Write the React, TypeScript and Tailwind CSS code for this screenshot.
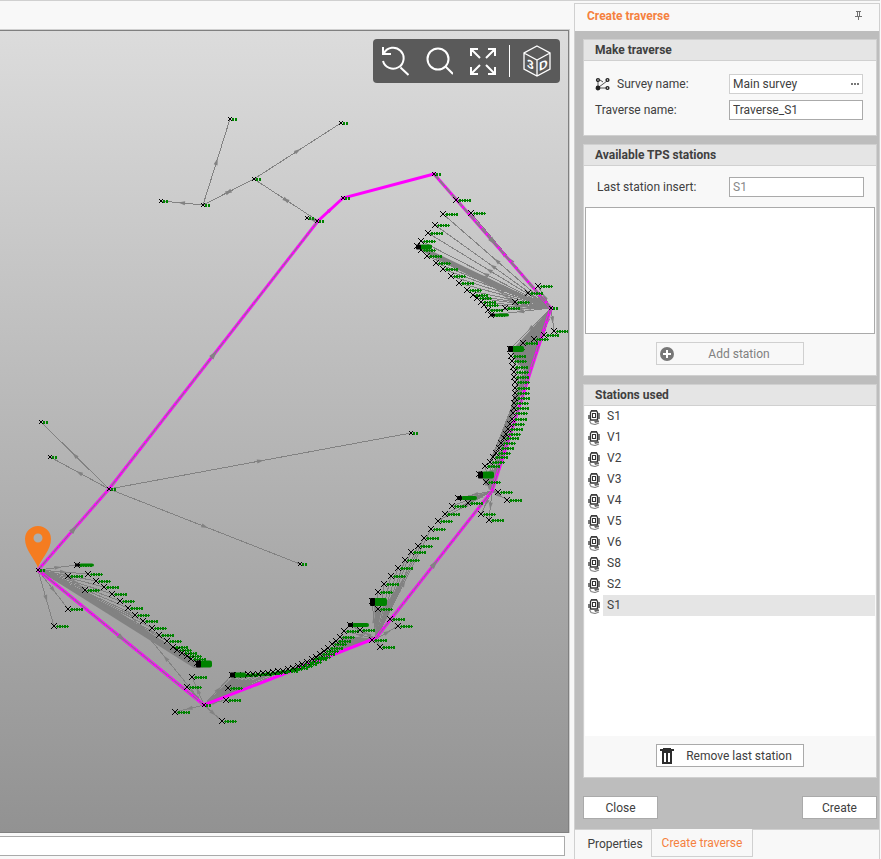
import React, { useState } from "react";

type Point = [number, number];

interface Fan {
  from: Point;
  to: Point[];
}

// Traverse legs, in drawing order
const traverse: Point[] = [
  [38, 570],
  [109, 489],
  [318, 221],
  [343, 198],
  [434, 174],
  [551, 308],
  [492, 491],
  [376, 638],
  [204, 705],
  [38, 570],
];

// Detail points along the coast, split by the station that observed them
const westPoints: Point[] = [
  [77, 565], [88, 574], [68, 576], [96, 581], [104, 587], [85, 590],
  [112, 594], [120, 601], [128, 608], [135, 615], [143, 621], [152, 628],
  [159, 635], [167, 641], [173, 647], [177, 650], [182, 653], [187, 656],
  [191, 659], [197, 663], [68, 609], [54, 626],
];

const southPoints: Point[] = [
  [192, 677], [187, 687], [175, 712], [222, 721], [226, 700], [228, 688],
  [232, 675], [238, 675], [243, 675], [248, 674], [253, 674], [258, 674],
  [263, 673], [268, 673], [273, 672], [278, 671], [283, 671], [288, 669],
];

const bayPoints: Point[] = [
  [293, 668], [298, 666], [302, 664], [307, 662], [312, 659], [316, 657],
  [320, 654], [324, 651], [328, 648], [332, 644], [336, 641], [340, 637],
  [344, 631], [350, 625], [360, 630],
];

const slopePoints: Point[] = [
  [431, 529], [424, 538], [418, 546], [411, 552], [405, 560], [398, 568],
  [391, 576], [384, 584], [378, 592], [372, 601], [378, 609], [390, 619],
  [398, 626], [380, 647],
];

const capePoints: Point[] = [
  [498, 492], [507, 500], [481, 514], [489, 520], [458, 498], [468, 503],
  [452, 506], [445, 514], [438, 521], [479, 474], [486, 482], [485, 466],
];

const ridgeLow: Point[] = [
  [490, 462], [493, 457], [496, 453], [499, 448], [501, 443], [504, 438],
  [506, 434], [508, 429], [510, 424], [512, 419], [513, 413], [514, 408],
  [514, 403], [515, 398], [515, 393],
];

const ridgeHigh: Point[] = [
  [515, 388], [515, 382], [514, 377], [514, 372], [513, 367], [512, 361],
  [511, 356], [510, 349], [523, 343], [534, 339], [544, 335], [554, 331],
];

const northPoints: Point[] = [
  [456, 200], [471, 213], [443, 214], [435, 225], [428, 233], [421, 241],
  [417, 246], [421, 250], [427, 256], [436, 263], [443, 269], [451, 276],
  [459, 283], [467, 290], [473, 295], [477, 298], [481, 302], [484, 305],
  [488, 310], [491, 315], [505, 308], [515, 302], [528, 293], [538, 286],
];

const fans: Fan[] = [
  { from: [38, 570], to: westPoints },
  { from: [204, 705], to: [...southPoints, [128, 612], [300, 667], [312, 661]] },
  { from: [376, 639], to: [...bayPoints, ...slopePoints] },
  { from: [492, 491], to: [...capePoints, ...ridgeLow] },
  { from: [551, 308], to: [...northPoints, ...ridgeHigh, ...ridgeLow] },
  { from: [109, 489], to: [[41, 422], [50, 457], [411, 433], [300, 564]] },
  { from: [203, 205], to: [[230, 119], [161, 201], [254, 179]] },
  { from: [254, 179], to: [[341, 123], [203, 205], [318, 221]] },
  { from: [318, 221], to: [[307, 218], [254, 179], [343, 198]] },
];

const detailPoints: Point[] = [
  ...westPoints,
  ...southPoints,
  ...bayPoints,
  ...slopePoints,
  ...capePoints,
  ...ridgeLow,
  ...ridgeHigh,
  ...northPoints,
  [372, 640],
];

const referencePoints: Point[] = [
  [230, 119], [341, 123], [254, 179], [161, 201], [203, 205], [307, 218],
  [317, 221], [343, 198], [434, 174], [41, 422], [50, 457], [109, 489],
  [411, 433], [300, 564], [38, 570], [204, 705], [551, 308],
];

// Spots where marks and labels pile up
const clusters = [
  { x: 77, y: 565, w: 15, h: 3 },
  { x: 198, y: 664, w: 12, h: 7 },
  { x: 232, y: 675, w: 12, h: 5 },
  { x: 350, y: 625, w: 17, h: 4 },
  { x: 372, y: 602, w: 13, h: 8 },
  { x: 459, y: 498, w: 16, h: 4 },
  { x: 480, y: 475, w: 12, h: 7 },
  { x: 510, y: 349, w: 12, h: 6 },
  { x: 418, y: 247, w: 12, h: 5 },
  { x: 492, y: 315, w: 15, h: 3 },
];

// Areas where the sight lines are too dense to tell apart
const denseAreas = [
  "38,570 110,606 203,668 194,668",
  "204,705 232,678 240,680 255,680",
  "376,639 374,606 382,608",
  "376,639 400,585 412,565 385,606",
  "376,639 344,636 330,652 350,648",
  "492,491 482,478 490,470 498,470",
  "492,491 462,499 470,502",
  "551,308 417,244 427,254 490,286",
  "551,308 512,350 516,362 526,370 534,352",
];

function linePath({ from, to }: Fan) {
  return to.map(([x, y]) => `M${from[0]} ${from[1]}L${x} ${y}`).join("");
}

function crossPath(points: Point[], s: number) {
  return points
    .map(([x, y]) => `M${x - s} ${y - s}L${x + s} ${y + s}M${x + s} ${y - s}L${x - s} ${y + s}`)
    .join("");
}

function Arrow({ from, to }: { from: Point; to: Point }) {
  const angle = (Math.atan2(to[1] - from[1], to[0] - from[0]) * 180) / Math.PI;
  const x = (from[0] + to[0]) / 2;
  const y = (from[1] + to[1]) / 2;
  return <path d="M4 0L-3 -2V2Z" transform={`translate(${x} ${y}) rotate(${angle})`} />;
}

function SurveyMap() {
  return (
    <svg className="absolute inset-0 h-full w-full" role="img" aria-label="Survey map">
      <g transform="translate(0 -31)">
        <g stroke="#828282" fill="none" shapeRendering="crispEdges">
          {fans.map((fan, i) => (
            <path key={i} d={linePath(fan)} />
          ))}
        </g>
        <g fill="#828282">
          {denseAreas.map((points) => (
            <polygon key={points} points={points} />
          ))}
          {fans.map((fan) =>
            fan.to.map((to, i) => <Arrow key={`${fan.from}-${i}`} from={fan.from} to={to} />)
          )}
        </g>

        <g fill="none">
          <polyline points={traverse.join(" ")} stroke="#ff00ff" strokeWidth="3" />
          <path
            d="M38 570L109 489L318 221M551 308L492 491L376 638M204 705L38 570"
            stroke="#828282"
            strokeWidth="1.200"
            strokeDasharray="6 2"
          />
          <path d="M434 174L551 308" stroke="#828282" strokeWidth="2" strokeDasharray="7 2" />
        </g>
        <g fill="#828282" stroke="#828282">
          <Arrow from={[109, 489]} to={[318, 221]} />
          <Arrow from={[38, 570]} to={[109, 489]} />
          <Arrow from={[376, 638]} to={[492, 491]} />
          <Arrow from={[434, 174]} to={[551, 308]} />
          <Arrow from={[38, 570]} to={[204, 705]} />
        </g>

        <g fill="none" stroke="#008200" shapeRendering="crispEdges">
          {detailPoints.map(([x, y], i) => (
            <g key={i}>
              <path d={`M${x + 2} ${y + 0.5}h13`} />
              <path d={`M${x + 3} ${y + 0.5}h12`} strokeWidth="3" strokeDasharray={i % 2 ? "1 1 2 1" : "2 1 1 1"} />
            </g>
          ))}
          {referencePoints.map(([x, y], i) => (
            <path key={i} d={`M${x + 2} ${y + 0.5}h6`} strokeWidth="3" strokeDasharray="2 1" />
          ))}
        </g>
        <g stroke="#000" fill="none" shapeRendering="crispEdges">
          <path d={crossPath(detailPoints, 3)} />
          <path d={crossPath(referencePoints, 2)} />
        </g>
        {clusters.map(({ x, y, w, h }) => (
          <g key={`${x}-${y}`}>
            <rect x={x + 2} y={y - h / 2} width={w} height={h} rx="2" fill="#008200" />
            <rect x={x - 2} y={y - h / 2} width="5" height={h} rx="1" fill="#000" />
          </g>
        ))}

        <path
          d="M38 568C35 559 25 550 25 539A13 13 0 0 1 51 539C51 550 41 559 38 568ZM38 533.5A4.5 4.5 0 1 0 38 542.5A4.5 4.5 0 1 0 38 533.5Z"
          fill="#f57c20"
          fillRule="evenodd"
        />
      </g>
    </svg>
  );
}

function MapToolbar() {
  const icon = "block h-8 w-7";
  return (
    <div className="absolute top-2 right-2 flex h-11 items-center rounded bg-[#5a5a5a] px-2 text-white">
      <div className="flex gap-4">
        <button type="button" aria-label="Previous zoom">
          <svg className={icon} viewBox="0 0 28 32" fill="none" stroke="currentColor" strokeWidth="2">
            <path d="M2 2v7h8" />
            <path d="M3 8A10.5 10.5 0 1 1 2 16M19.500 22.500L27.500 30" />
          </svg>
        </button>
        <button type="button" aria-label="Zoom">
          <svg className={icon} viewBox="0 0 28 32" fill="none" stroke="currentColor" strokeWidth="2">
            <circle cx="13" cy="14" r="10.500" />
            <path d="M20.500 21.500L28 29" />
          </svg>
        </button>
        <button type="button" aria-label="Zoom extents">
          <svg className={icon} viewBox="0 0 28 32" fill="none" stroke="currentColor" strokeWidth="2">
            <path d="M2 11V4h7M2 4l9 9M19 4h7v7M26 4l-9 9M2 22v7h7M2 29l9-9M19 29h7v-7M26 29l-9-9" />
          </svg>
        </button>
      </div>
      <span className="mx-3 h-8 w-px bg-white" />
      <button type="button" aria-label="3D view">
        <svg className="block h-8 w-[30px]" viewBox="0 0 30 32" fill="none" stroke="currentColor">
          <path d="M15 1L28 8V24L15 31L2 24V8ZM2 8L15 15L28 8M15 15V31" strokeWidth="1.300" />
          <g fill="currentColor" stroke="none" fontFamily="Liberation Sans, sans-serif" fontSize="12" fontWeight="700">
            <text transform="translate(5 22) skewY(24)">3</text>
            <text transform="translate(17 26) skewY(-24)">D</text>
          </g>
        </svg>
      </button>
    </div>
  );
}

function StationIcon() {
  return (
    <svg className="h-4 w-3 shrink-0" viewBox="0 0 12 16" fill="none" aria-hidden="true">
      <path d="M3 1.500H9" stroke="#666" strokeWidth="1" />
      <path d="M2.500 11V3.500L3.500 2H8.500L9.500 3.500V11Z" fill="#fff" stroke="#333" strokeWidth="1.300" />
      <path d="M1 6V10M11 4V10" stroke="#333" strokeWidth="1.300" />
      <rect x="4.500" y="4.500" width="3" height="4" stroke="#333" />
      <path d="M1.500 11.500L3 14.500L7 15.500L11 14" stroke="#888" strokeWidth="1.200" />
      <path d="M6 11.500H11V13L7 14Z" fill="#666" />
    </svg>
  );
}

function Card({ title, className = "", children }: { title: string; className?: string; children: React.ReactNode }) {
  return (
    <section className={`flex flex-col border border-[#d0d0d0] bg-[#f8f8f8] ${className}`}>
      <h2 className="h-[21px] shrink-0 border-b border-[#d0d0d0] bg-[#e5e5e5] pl-[11px] leading-5 font-bold">
        {title}
      </h2>
      {children}
    </section>
  );
}

const stations = ["S1", "V1", "V2", "V3", "V4", "V5", "V6", "S8", "S2", "S1"];

export default function App() {
  const [traverseName, setTraverseName] = useState("Traverse_S1");
  const [selected, setSelected] = useState(stations.length - 1);

  return (
    <div className="flex h-screen min-h-[600px] bg-[#f8f8f8] font-['Roboto',sans-serif] text-[12px] text-[#404040]">
      <main className="flex min-w-0 flex-1 flex-col border-t border-[#d0d0d0]">
        <div className="h-7 shrink-0" />
        <div className="mr-1 flex min-h-0 flex-1 border-t border-r border-[#d0d0d0]">
          <div className="relative flex-1 overflow-hidden border-t border-r border-b border-[#808080] bg-linear-to-b from-[#dcdcdc] to-[#929292]">
            <SurveyMap />
            <MapToolbar />
          </div>
        </div>
        <div className="h-[26px] shrink-0 pt-[3px] pr-[9px]">
          <input aria-label="Command" className="block h-5 w-full border border-l-0 border-[#aaa] bg-white px-2 outline-none" />
        </div>
      </main>

      <aside className="mr-px flex w-[306px] shrink-0 flex-col border-t border-[#d0d0d0] pt-[2px]">
        <div className="flex min-h-0 flex-1 flex-col border-x border-t border-[#d0d0d0]">
          <header className="flex h-[27px] shrink-0 items-center justify-between pr-[17px] pb-1 pl-3">
            <h1 className="font-bold text-[#f5813f]">Create traverse</h1>
            <button type="button" aria-label="Pin panel">
              <svg className="block h-[9px] w-[7px]" viewBox="0 0 7 9" fill="none" stroke="#707070" shapeRendering="crispEdges">
                <path d="M1 .5H6M2.500 1V5M4.500 1V5M0 5.500H7M3.500 6V9" />
              </svg>
            </button>
          </header>

          <div className="flex min-h-0 flex-1 flex-col bg-[#bdbdbd] pt-2 pr-[2px] pb-[10px] pl-2">
            <Card title="Make traverse" className="mb-2">
              <div className="flex flex-col gap-[6px] pt-[13px] pr-[13px] pb-[15px] pl-[11px]">
                <div className="flex h-5 items-center">
                  <label htmlFor="survey" className="flex w-[134px] shrink-0 items-center gap-[6px]">
                    <svg className="h-[14px] w-4" viewBox="0 0 16 14" fill="none" stroke="#222" aria-hidden="true">
                      <path d="M3 4V9M5 11H11M4 10L12 4M5 3l3 2" strokeWidth="1" stroke="#555" />
                      <g strokeWidth="1.400">
                        <circle cx="3" cy="3" r="1.400" />
                        <circle cx="12.500" cy="3" r="1.400" />
                        <circle cx="12.500" cy="11" r="1.400" />
                        <circle cx="3" cy="11" r="1.700" fill="#222" />
                      </g>
                    </svg>
                    Survey name:
                  </label>
                  <div className="flex h-5 min-w-0 flex-1 items-center border border-[#d0d0d0] bg-white pr-[3px] pl-[3px]">
                    <input id="survey" readOnly value="Main survey" className="min-w-0 flex-1 leading-4 outline-none" />
                    <button type="button" aria-label="Choose survey">
                      <svg className="block h-[2px] w-2" viewBox="0 0 8 2" fill="#777">
                        <path d="M0 0h2v2H0zM3 0h2v2H3zM6 0h2v2H6z" />
                      </svg>
                    </button>
                  </div>
                </div>
                <div className="flex h-5 items-center">
                  <label htmlFor="traverse" className="w-[134px] shrink-0">
                    Traverse name:
                  </label>
                  <input
                    id="traverse"
                    value={traverseName}
                    onChange={(e) => setTraverseName(e.target.value)}
                    className="h-5 min-w-0 flex-1 border border-[#aaa] bg-white px-[3px] leading-4 outline-none"
                  />
                </div>
              </div>
            </Card>

            <Card title="Available TPS stations" className="mb-2">
              <div className="mt-[11px] mb-[10px] flex h-5 items-center pr-3 pl-[13px]">
                <label htmlFor="last-station" className="w-[132px] shrink-0">
                  Last station insert:
                </label>
                <input
                  id="last-station"
                  readOnly
                  value="S1"
                  className="h-5 min-w-0 flex-1 border border-[#aaa] bg-white px-[3px] leading-4 text-[#888] outline-none"
                />
              </div>
              <div role="listbox" aria-label="Available stations" className="mx-px h-[127px] border border-[#aaa] bg-white" />
              <button
                type="button"
                disabled
                className="mx-auto mt-2 mb-[10px] flex h-[23px] w-[148px] items-center border border-[#d0d0d0] pl-[2px] text-[#808080]"
              >
                <svg className="h-4 w-4" viewBox="0 0 16 16" aria-hidden="true">
                  <circle cx="8" cy="8" r="7" fill="#777" />
                  <path d="M8 4V12M4 8H12" stroke="#fff" strokeWidth="2" />
                </svg>
                <span className="flex-1 text-center">Add station</span>
              </button>
            </Card>

            <Card title="Stations used" className="mb-[18px] min-h-0 flex-1">
              <ul role="listbox" aria-label="Stations used" className="mx-px min-h-0 flex-1 overflow-hidden bg-white">
                {stations.map((name, i) => (
                  <li
                    key={i}
                    role="option"
                    aria-selected={i === selected}
                    onClick={() => setSelected(i)}
                    className="flex h-[21px] items-center gap-[3px] pl-[3px]"
                  >
                    <StationIcon />
                    <span className={`flex-1 pl-1 leading-[21px] ${i === selected ? "bg-[#e5e5e5]" : ""}`}>{name}</span>
                  </li>
                ))}
              </ul>
              <button
                type="button"
                className="mx-auto mt-2 mb-[10px] flex h-[23px] w-[148px] shrink-0 items-center border border-[#aaa] bg-white pl-[2px]"
              >
                <svg className="h-4 w-4" viewBox="0 0 16 16" fill="#2d2d2d" aria-hidden="true">
                  <path d="M4 0h8v1h3v2H1V1h3zM3 3h10v13H3zM5 5v9h2V5zM9 5v9h2V5z" fillRule="evenodd" />
                </svg>
                <span className="flex-1 text-center">Remove last station</span>
              </button>
            </Card>

            <div className="flex justify-between">
              <button type="button" className="h-[23px] w-[75px] border border-[#aaa] bg-white">
                Close
              </button>
              <button type="button" className="h-[23px] w-[75px] border border-[#aaa] bg-white">
                Create
              </button>
            </div>
          </div>

          <nav className="flex h-[30px] shrink-0 items-start">
            <button type="button" className="h-7 w-[76px] border-t border-[#d0d0d0] pl-1">
              Properties
            </button>
            <button type="button" className="h-7 w-[102px] border-x border-b border-[#d0d0d0] text-[#f5813f]">
              Create traverse
            </button>
            <span className="flex-1 border-t border-[#d0d0d0]" />
          </nav>
        </div>
      </aside>
    </div>
  );
}
